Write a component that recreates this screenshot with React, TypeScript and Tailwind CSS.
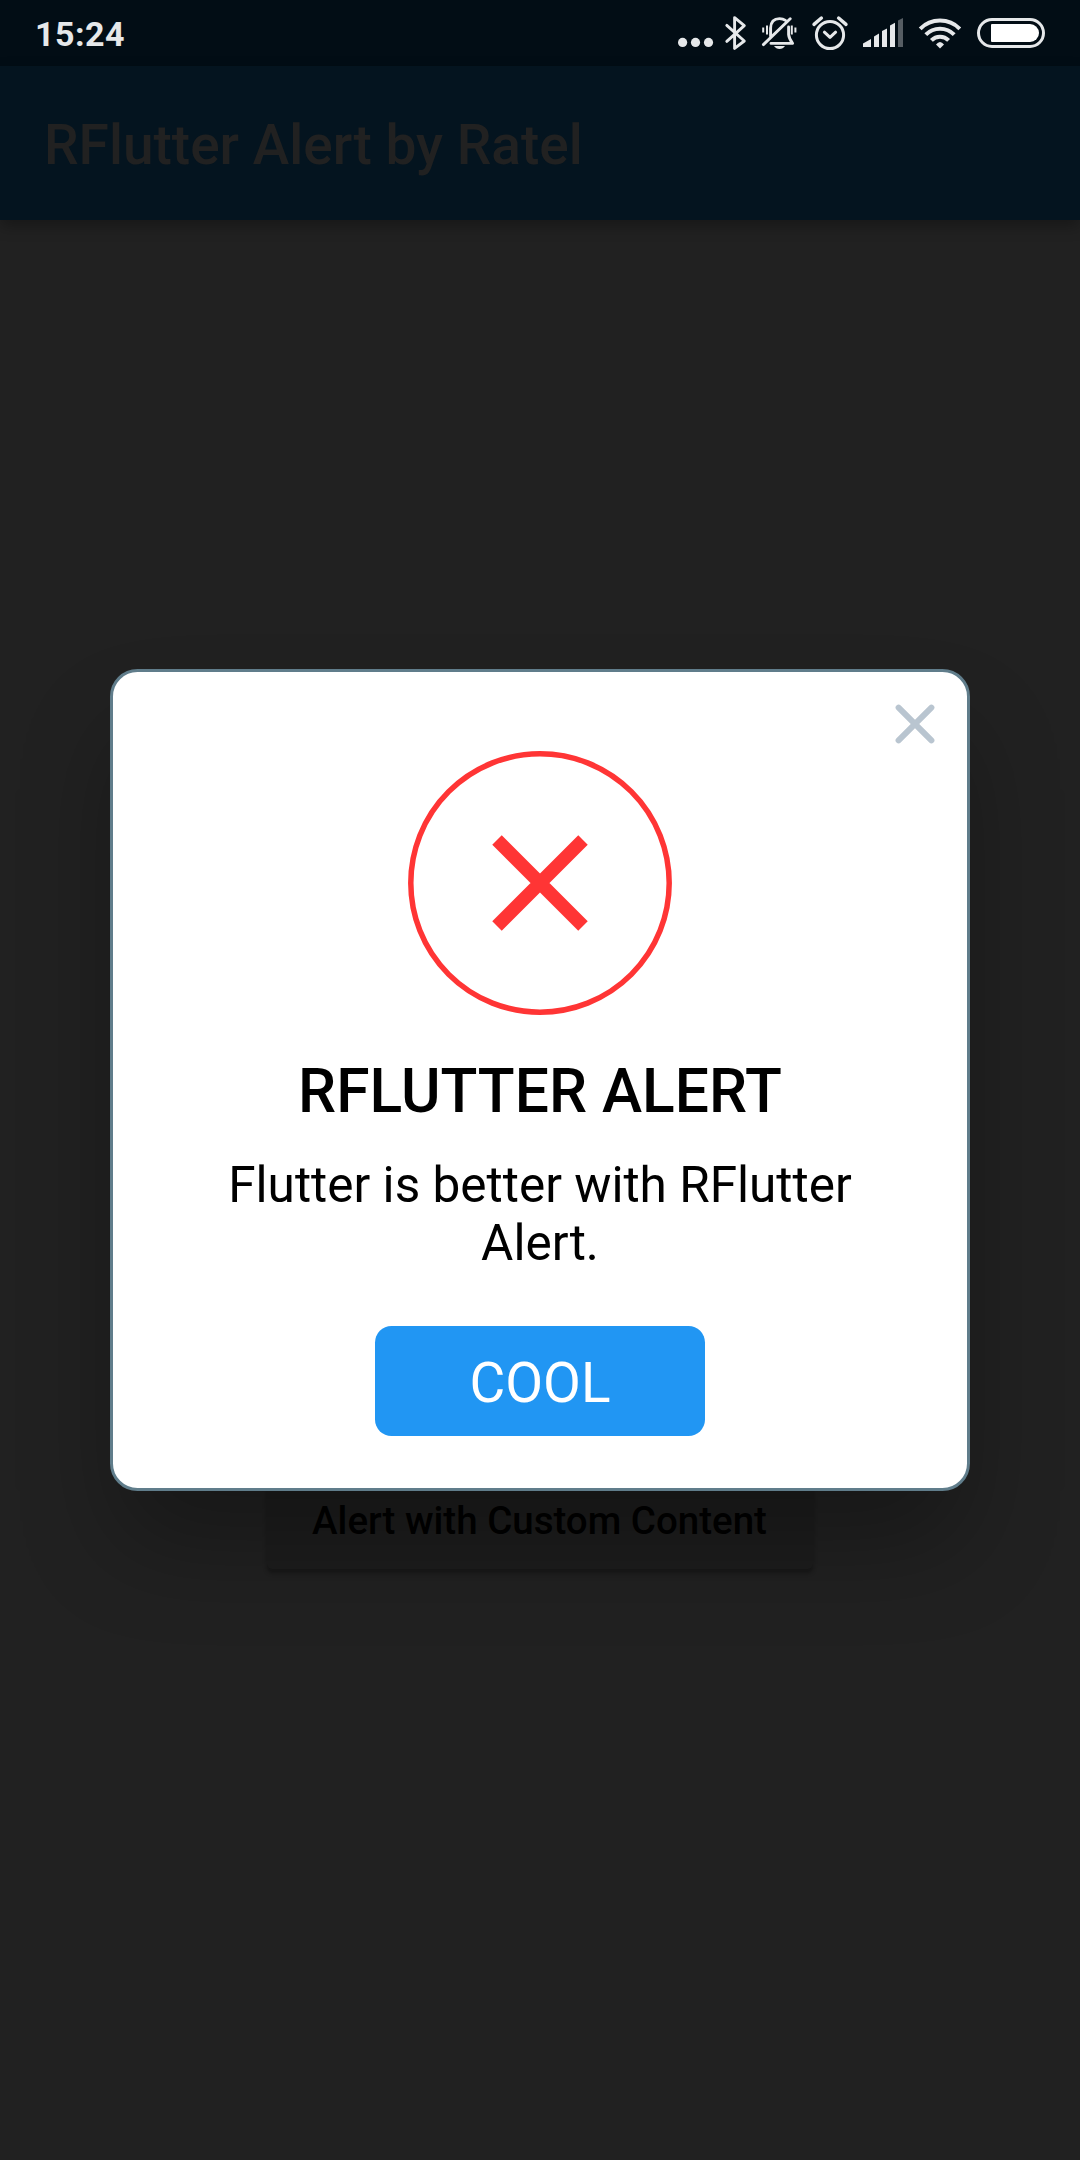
const INK = "#e6e8ea";

function StatusIcons() {
  return (
    <div className="flex items-center">
      <svg width="38" height="66" viewBox="677 0 38 66" fill={INK}>
        <circle cx="682.6" cy="42.4" r="4.6" />
        <circle cx="695.5" cy="42.4" r="4.6" />
        <circle cx="708.5" cy="42.4" r="4.6" />
      </svg>
      <svg width="37" height="66" viewBox="715 0 37 66" fill="none" stroke={INK} strokeWidth="2.9" strokeLinecap="round" strokeLinejoin="round">
        <path d="M726.8 25.4 L744.3 41 L734.6 48.4 V17.6 L744.3 25.6 L726.8 41.4" />
      </svg>
      <svg width="53" height="66" viewBox="752 0 53 66" fill="none" stroke={INK} strokeWidth="2.9" strokeLinecap="round">
        <path d="M770.6 36 V28 Q771 18.6 779.5 18.6 Q783 18.6 785.5 20.4" />
        <path d="M788.6 27 V34.5 Q789 38.5 792.6 43.4 H771" strokeLinejoin="round" />
        <path d="M763.4 44.6 L790.2 18.8" />
        <path d="M763.2 27.6 V32.4 M767 25.4 V34.6 M791.8 25.4 V34.6 M795.4 27.6 V32.4" strokeWidth="2" strokeLinecap="butt" />
        <path d="M774 46 H785 Q783 49 779.5 49 Q776 49 774 46Z" fill={INK} stroke="none" />
      </svg>
      <svg width="50" height="66" viewBox="805 0 50 66" fill="none" stroke={INK} strokeWidth="3" strokeLinecap="round" strokeLinejoin="round">
        <circle cx="830" cy="35" r="13.6" />
        <path d="M824.4 32.2 L830 37.4 L835.6 32.2" />
        <path d="M814 24.4 L821.4 18 M838.6 18 L846 24.4" strokeWidth="3.4" />
      </svg>
      <svg width="57" height="66" viewBox="855 0 57 66" fill={INK}>
        <path d="M863 47 V43.6 L871 39 V47Z M874 47 V36.4 L879 33.6 V47Z M882 47 V31 L887 28.4 V47Z M890 47 V25.4 L895 22.8 V47Z" />
        <path d="M898 47 V20.4 L903 18 V47Z" fill="#565d63" />
      </svg>
      <svg width="56" height="66" viewBox="912 0 56 66" fill="none" stroke={INK} strokeWidth="4">
        <path d="M920.2 28.8 A28 28 0 0 1 959.8 28.8" />
        <path d="M925.8 34.6 A20 20 0 0 1 954.2 34.6" />
        <path d="M931.4 40.4 A12 12 0 0 1 948.6 40.4" />
        <path d="M936 44.6 Q940 39.6 944 44.6 L940 48.4Z" fill={INK} stroke="none" />
      </svg>
      <svg width="77" height="66" viewBox="968 0 77 66" fill="none">
        <rect x="978.5" y="19.5" width="65" height="27" rx="13.5" stroke={INK} strokeWidth="3" />
        <path d="M992 24 H1030 A9 9 0 0 1 1030 42 H992 Q991 42 991 41 V25 Q991 24 992 24Z" fill="#ffffff" />
      </svg>
    </div>
  );
}

export default function App() {
  return (
    <div className="relative flex h-[2160px] w-[1080px] flex-col overflow-hidden bg-[#212121] font-[Roboto,sans-serif]">
      <div className="flex h-[66px] shrink-0 items-center justify-between bg-[#020d15] px-[35px]">
        <span className="pt-[2px] text-[34px] leading-[40px] font-bold tracking-[0.5px] text-[#e6e8ea]">15:24</span>
        <StatusIcons />
      </div>
      <header className="flex h-[154px] shrink-0 items-center bg-[#04141f] pt-[4px] pl-[44px] shadow-[0_6px_14px_rgba(0,0,0,0.3)]">
        <h1 className="text-[55px] leading-[64px] font-medium text-[#212121]">RFlutter Alert by Ratel</h1>
      </header>
      <main className="flex flex-1 flex-col items-center pt-[1250px]">
        <button className="h-[99px] w-[546px] rounded-[5px] bg-[#1d1d1d] pt-[1px] pr-[1px] text-[38.5px] leading-[45px] font-medium text-black shadow-[0_4px_4px_rgba(0,0,0,0.3)]">
          Alert with Custom Content
        </button>
      </main>

      <div className="absolute inset-0 flex items-center justify-center">
        <div role="dialog" className="flex h-[822px] w-[860px] flex-col rounded-[27.5px] border-[3px] border-[#607d8b] bg-white shadow-[0_60px_100px_-10px_rgba(0,0,0,0.3)]">
          <div className="flex h-[79px] shrink-0 items-center justify-end pt-[25px] pr-[32px]">
            <svg width="40" height="40" viewBox="0 0 40 40" stroke="#b9c5d0" strokeWidth="6" strokeLinecap="round">
              <path d="M3.6 3.6 L36.4 36.4 M36.4 3.6 L3.6 36.4" />
            </svg>
          </div>
          <div className="flex flex-col items-center">
            <svg width="264" height="264" viewBox="0 0 264 264" fill="none" stroke="#ff3535">
              <circle cx="132" cy="132" r="129.2" strokeWidth="5.5" />
              <path d="M89 89 L175 175 M175 89 L89 175" strokeWidth="13.4" />
            </svg>
            <h2 className="mt-[41px] text-[60.5px] leading-[71px] font-medium text-black">RFLUTTER ALERT</h2>
            <p className="mt-[29px] w-[720px] text-center text-[49.5px] leading-[58px] text-black">
              Flutter is better with RFlutter
              <br />
              Alert.
            </p>
            <button className="mt-[54px] h-[110px] w-[330px] rounded-[16.5px] bg-[#2196f3] pt-[4px] text-[55px] leading-[64px] text-white">COOL</button>
          </div>
        </div>
      </div>
    </div>
  );
}
